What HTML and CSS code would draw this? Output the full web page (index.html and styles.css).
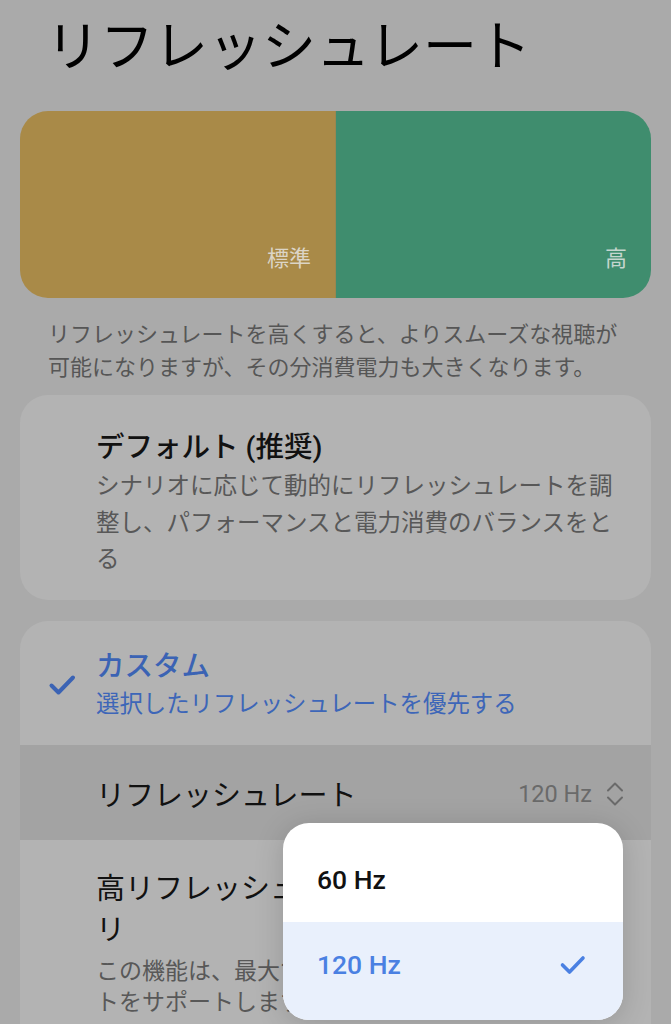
FILE: index.html
```html
<!DOCTYPE html>
<html lang="ja">
<head>
<meta charset="utf-8">
<link rel="stylesheet" href="styles.css">
</head>
<body>
<div class="page">
  <h1 class="title">リフレッシュレート</h1>

  <div class="bar">
    <div class="bar-half std"><span>標準</span></div>
    <div class="bar-half high"><span>高</span></div>
  </div>

  <p class="desc">リフレッシュレートを高くすると、よりスムーズな視聴が可能になりますが、その分消費電力も大きくなります。</p>

  <div class="card card-default">
    <div class="card-title">デフォルト (推奨)</div>
    <div class="card-sub">シナリオに応じて動的にリフレッシュレートを調整し、パフォーマンスと電力消費のバランスをとる</div>
  </div>

  <div class="card card-custom">
    <div class="custom-head">
      <div class="check-col">
        <svg class="check" width="28" height="22" viewBox="0 0 28 22"><path d="M3.5 11.5 L10.5 18.5 L25 3.5" fill="none" stroke="#3b63b4" stroke-width="4" stroke-linecap="round" stroke-linejoin="round"/></svg>
      </div>
      <div class="custom-text">
        <div class="card-title blue">カスタム</div>
        <div class="custom-sub">選択したリフレッシュレートを優先する</div>
      </div>
    </div>

    <div class="rate-row">
      <div class="rate-label">リフレッシュレート</div>
      <div class="rate-value">
        <span>120 Hz</span>
        <svg width="18" height="26" viewBox="0 0 18 26"><path d="M2 9.5 L9 2.5 L16 9.5 M2 16.5 L9 23.5 L16 16.5" fill="none" stroke="#6a6a6a" stroke-width="2" stroke-linecap="round" stroke-linejoin="round"/></svg>
      </div>
    </div>

    <div class="app-row">
      <div class="app-text">
        <div class="app-title">高リフレッシュレート対応アプ<br>リ</div>
        <div class="app-sub">この機能は、最大120 Hzのリフレッシュレー<br>トをサポートしますが、一部のアプリ</div>
      </div>
    </div>
  </div>

  <div class="popup">
    <div class="opt">60 Hz</div>
    <div class="opt selected">
      <span>120 Hz</span>
      <svg width="28" height="24" viewBox="0 0 28 24"><path d="M3.5 12 L10.5 19 L24 5" fill="none" stroke="#4a80e2" stroke-width="3.6" stroke-linecap="round" stroke-linejoin="round"/></svg>
    </div>
  </div>
</div>
</body>
</html>
```

FILE: styles.css
```css
html, body {
  margin: 0;
  padding: 0;
}
body {
  background: #aaaaaa;
  font-family: Roboto, "Noto Sans CJK JP", sans-serif;
  width: 671px;
  height: 1024px;
  overflow: hidden;
}
.page {
  position: relative;
  height: 1024px;
  overflow: hidden;
}
.title {
  margin: 0;
  padding: 21px 0 0 46px;
  font-size: 54px;
  line-height: 54px;
  font-weight: 400;
  color: #000;
}
.bar {
  display: flex;
  margin: 36px 20px 0 20px;
  height: 187px;
  border-radius: 28px;
  overflow: hidden;
}
.bar-half {
  flex: 1;
  display: flex;
  align-items: flex-end;
  justify-content: flex-end;
  padding: 0 24px 22px 0;
  font-size: 22px;
  line-height: 34px;
  color: rgba(235, 235, 235, 0.78);
}
.std { background: #a98a48; }
.high { background: #3f8d6e; border-left: 1px solid #9a8650; }
.desc {
  margin: 20px 0 0 0;
  padding: 0 40px 0 48px;
  font-size: 22px;
  line-height: 33px;
  color: #565656;
}
.card {
  margin: 11px 20px 0 20px;
  background: #b3b3b3;
  border-radius: 28px;
}
.card-default {
  padding: 35px 25px 22px 76px;
}
.card-title {
  font-size: 28.5px;
  line-height: 36px;
  font-weight: 500;
  color: #111;
}
.card-title.blue {
  color: #3b63b4;
}
.card-sub {
  margin-top: 2px;
  font-size: 23.5px;
  line-height: 36.5px;
  color: #585858;
}
.card-custom {
  margin-top: 21px;
  padding: 28px 0 0 0;
  height: 460px;
  overflow: hidden;
}
.custom-head {
  display: flex;
  align-items: center;
  padding: 0 25px 24px 28px;
}
.check-col {
  width: 48px;
  display: flex;
  align-items: center;
}
.custom-sub {
  margin-top: 2px;
  font-size: 23.4px;
  line-height: 34px;
  color: #3d66b8;
}
.rate-row {
  display: flex;
  align-items: center;
  justify-content: space-between;
  height: 95px;
  background: #a3a3a3;
  padding: 0 27px 0 76px;
}
.rate-label {
  font-size: 29px;
  line-height: 40px;
  color: #111;
  padding-top: 8px;
}
.rate-value {
  display: flex;
  align-items: center;
  gap: 14px;
  font-size: 23.5px;
  color: #6a6a6a;
  padding-top: 3px;
}
.rate-value svg {
  display: block;
}
.app-row {
  padding: 29px 25px 0 76px;
}
.app-title {
  font-size: 29px;
  line-height: 41px;
  color: #111;
  white-space: nowrap;
}
.app-sub {
  margin-top: 5px;
  font-size: 23px;
  line-height: 31.5px;
  color: #585858;
  white-space: nowrap;
}
.popup {
  position: absolute;
  left: 283px;
  top: 823px;
  width: 340px;
  background: #ffffff;
  border-radius: 26px;
  overflow: hidden;
  box-shadow: 0 4px 30px rgba(0, 0, 0, 0.16);
}
.opt {
  display: flex;
  align-items: center;
  justify-content: space-between;
  height: 85px;
  padding: 0 36px 0 34px;
  font-size: 26.5px;
  font-weight: 500;
  color: #111;
}
.opt:first-child {
  padding-top: 14px;
}
.opt.selected {
  background: #e9f0fc;
  color: #4a80e2;
  padding-bottom: 13px;
}
.opt svg {
  display: block;
}
```
